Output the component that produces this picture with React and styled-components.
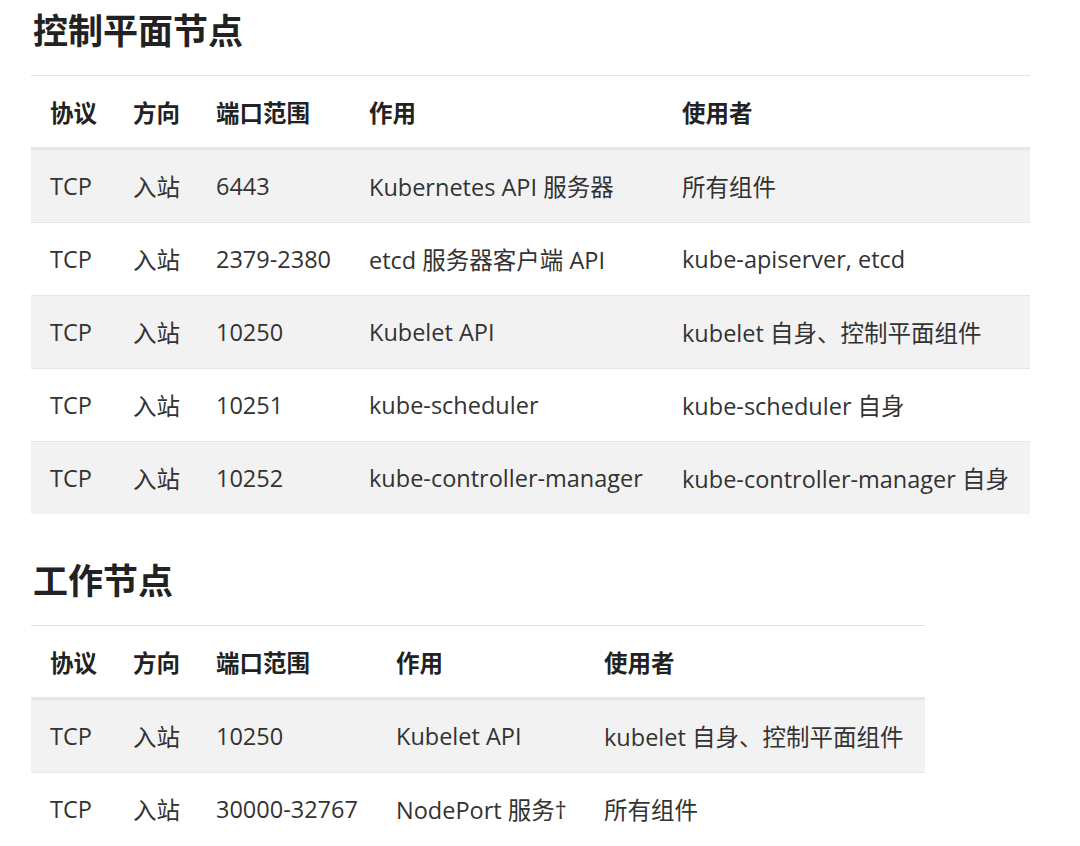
import React from 'react'
import styled, { createGlobalStyle } from 'styled-components'

const GlobalStyle = createGlobalStyle`
  body {
    margin: 0;
    background: #fff;
    font-family: "Open Sans", "Noto Sans CJK SC", sans-serif;
    color: #333;
  }
`

const Page = styled.div`
  padding: 6px 0 0 31px;
`

const Heading = styled.h2`
  margin: 0 0 ${props => props.gap}px 2px;
  font-size: 35px;
  font-weight: 700;
  line-height: 50px;
  color: #222;
`

const Table = styled.table`
  width: ${props => props.width}px;
  border-collapse: collapse;
  table-layout: fixed;
  border-top: 1px solid #e3e3e3;
  margin-bottom: ${props => props.bottom || 0}px;
`

const HeadCell = styled.th`
  text-align: left;
  font-weight: 700;
  font-size: 23.5px;
  color: #222;
  padding: 0 0 0 19px;
  height: 71px;
  border-bottom: 3px solid #e6e6e6;
  white-space: nowrap;
`

const Row = styled.tr`
  background: ${props => props.striped ? '#f2f2f2' : '#fff'};
  & + & {
    border-top: 1px solid #e6e6e6;
  }
`

const Cell = styled.td`
  font-size: 23.5px;
  color: #333;
  padding: 0 0 0 19px;
  height: 72px;
  white-space: nowrap;
`

const headers = ['协议', '方向', '端口范围', '作用', '使用者']

const controlRows = [
  ['TCP', '入站', '6443', 'Kubernetes API 服务器', '所有组件'],
  ['TCP', '入站', '2379-2380', 'etcd 服务器客户端 API', 'kube-apiserver, etcd'],
  ['TCP', '入站', '10250', 'Kubelet API', 'kubelet 自身、控制平面组件'],
  ['TCP', '入站', '10251', 'kube-scheduler', 'kube-scheduler 自身'],
  ['TCP', '入站', '10252', 'kube-controller-manager', 'kube-controller-manager 自身'],
]

const workerRows = [
  ['TCP', '入站', '10250', 'Kubelet API', 'kubelet 自身、控制平面组件'],
  ['TCP', '入站', '30000-32767', 'NodePort 服务†', '所有组件'],
]

const PortTable = ({ cols, rows, bottom }) => (
  <Table width={cols.reduce((a, b) => a + b, 0)} bottom={bottom}>
    <colgroup>
      {cols.map((w, i) => <col key={i} style={{ width: w }} />)}
    </colgroup>
    <thead>
      <tr>
        {headers.map(h => <HeadCell key={h}>{h}</HeadCell>)}
      </tr>
    </thead>
    <tbody>
      {rows.map((r, i) => (
        <Row key={i} striped={i % 2 === 0}>
          {r.map((c, j) => <Cell key={j}>{c}</Cell>)}
        </Row>
      ))}
    </tbody>
  </Table>
)

export default function App() {
  return (
    <>
      <GlobalStyle />
      <Page>
        <Heading gap={19}>控制平面节点</Heading>
        <PortTable cols={[83, 83, 153, 313, 367]} rows={controlRows} bottom={42} />
        <Heading gap={19}>工作节点</Heading>
        <PortTable cols={[83, 83, 180, 208, 340]} rows={workerRows} />
      </Page>
    </>
  )
}
